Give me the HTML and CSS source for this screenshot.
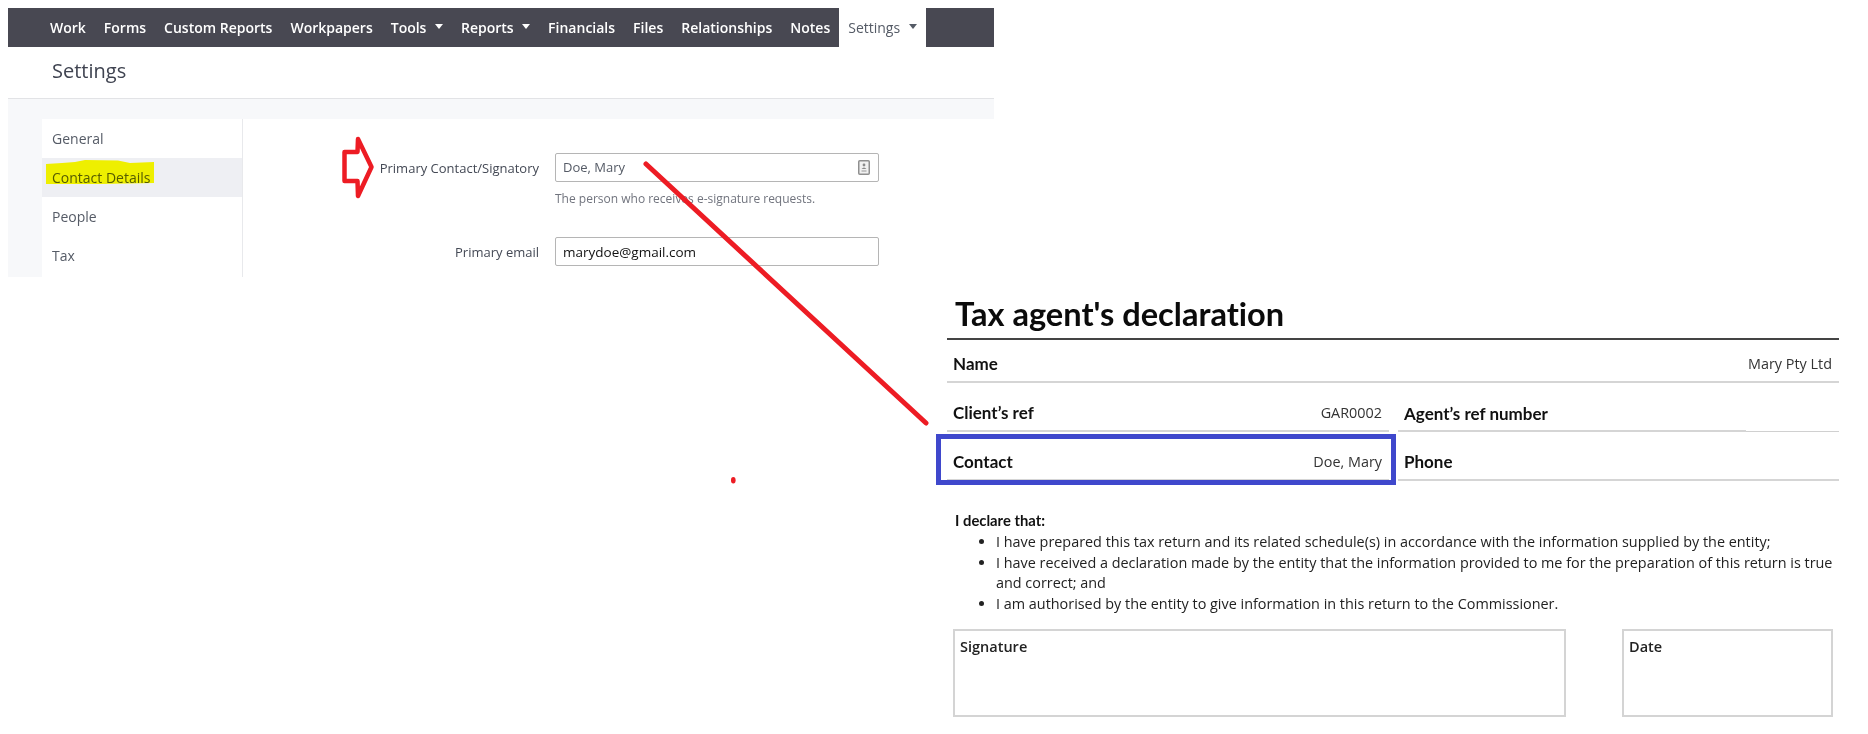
FILE: index.html
```html
<!DOCTYPE html>
<html lang="en">
<head>
<meta charset="utf-8">
<title>Settings and Tax agent's declaration</title>
<link rel="stylesheet" href="styles.css">
</head>
<body>
<div class="page">
  <section class="app">
    <nav class="nav">
      <a class="nav-item">Work</a>
      <a class="nav-item">Forms</a>
      <a class="nav-item">Custom Reports</a>
      <a class="nav-item">Workpapers</a>
      <a class="nav-item">Tools<i class="caret"></i></a>
      <a class="nav-item">Reports<i class="caret"></i></a>
      <a class="nav-item">Financials</a>
      <a class="nav-item">Files</a>
      <a class="nav-item">Relationships</a>
      <a class="nav-item">Notes</a>
      <a class="nav-item active">Settings<i class="caret"></i></a>
    </nav>
    <header class="app-head">Settings</header>
    <div class="app-body">
      <div class="sheet">
        <aside class="side">
          <div class="side-item">General</div>
          <div class="side-item current">Contact Details</div>
          <div class="side-item">People</div>
          <div class="side-item">Tax</div>
        </aside>
        <div class="form">
          <div class="field">
            <label class="field-label">Primary Contact/Signatory</label>
            <div class="input picker">
              <span>Doe, Mary</span>
              <svg class="book" width="12" height="15" viewBox="0 0 12 15">
                <rect x="0.75" y="0.75" width="10.5" height="13.5" rx="1" fill="#f1f1f1" stroke="#8f8f8f" stroke-width="1.5"/>
                <circle cx="6" cy="5" r="1.4" fill="#8a8a8a"/>
                <path d="M3.5 9 Q6 5.8 8.5 9 Z" fill="#8a8a8a"/>
                <rect x="3.5" y="10" width="5" height="2" fill="#c4c4c4"/>
              </svg>
            </div>
          </div>
          <p class="help">The person who receives e-signature requests.</p>
          <div class="field second">
            <label class="field-label">Primary email</label>
            <div class="input email">marydoe@gmail.com</div>
          </div>
        </div>
      </div>
    </div>
  </section>

  <section class="doc">
    <h1 class="doc-title">Tax agent's declaration</h1>
    <div class="doc-grid">
      <div class="row wide first"><b>Name</b><span class="val">Mary Pty Ltd</span></div>
      <div class="row"><b>Client’s ref</b><span class="val">GAR0002</span></div>
      <div class="row split"><b>Agent’s ref number</b></div>
      <div class="row"><b>Contact</b><span class="val">Doe, Mary</span></div>
      <div class="row"><b>Phone</b></div>
    </div>
    <p class="declare">I declare that:</p>
    <ul class="points">
      <li>I have prepared this tax return and its related schedule(s) in accordance with the information supplied by the entity;</li>
      <li>I have received a declaration made by the entity that the information provided to me for the preparation of this return is true and correct; and</li>
      <li>I am authorised by the entity to give information in this return to the Commissioner.</li>
    </ul>
    <div class="sign">
      <div class="sign-box signature">Signature</div>
      <div class="sign-box date">Date</div>
    </div>
  </section>

  <svg class="marks" width="1868" height="734" viewBox="0 0 1868 734">
    <path class="hl" d="M46 164 L62 163 L75 162 L85 160 L118 160.500 L130 163 L154 162 L154 183 L100 184 L46 184 Z"/>
    <path class="pen arrow" d="M344.500 152 H357.500 L358 139 L371.500 167 L358 196 L357.500 181 H344.500 Z"/>
    <path class="pen" d="M646 164 L926 423"/>
    <ellipse class="dot" cx="733.300" cy="480.300" rx="2.300" ry="3.300"/>
    <rect class="box" x="938.500" y="436.500" width="455" height="46"/>
  </svg>
</div>
</body>
</html>
```

FILE: styles.css
```css
* { box-sizing: border-box; }
html, body { margin: 0; padding: 0; background: #fff; }
.page {
  position: relative;
  width: 1868px;
  height: 734px;
  overflow: hidden;
  padding: 8px 0 0 8px;
  font-family: "Open Sans", sans-serif;
}

/* Settings app */
.app { width: 986px; height: 269px; overflow: hidden; }
.nav {
  display: flex;
  align-items: stretch;
  height: 39px;
  padding-left: 33px;
  background: #484852;
}
.nav-item {
  display: flex;
  align-items: center;
  padding: 0 9px;
  color: #fff;
  font-size: 14px;
  font-weight: 600;
  white-space: nowrap;
}
.nav-item.active { color: #555b66; background: #fff; font-weight: 400; }
.caret {
  width: 0;
  height: 0;
  margin: 0 0 2px 8.500px;
  border-top: 5px solid #fff;
  border-left: 4px solid transparent;
  border-right: 4px solid transparent;
}
.active .caret { border-top-color: #555b66; }
.app-head {
  height: 52px;
  padding: 10px 0 0 44px;
  color: #3f4350;
  font-size: 20px;
  line-height: 27px;
  border-bottom: 1px solid #e2e3e6;
}
.app-body { height: 178px; padding: 20px 0 0 34px; background: #f7f8fa; }
.sheet { display: flex; height: 158px; background: #fff; }
.side { width: 201px; border-right: 1px solid #e8e9ec; }
.side-item {
  height: 39px;
  padding-left: 10px;
  color: #555b66;
  font-size: 14px;
  line-height: 39px;
}
.side-item.current { background: #eeeff3; }
.form { flex: 1; padding: 34px 0 0 134px; }
.field { display: flex; align-items: center; }
.field.second { margin-top: 31px; }
.field-label {
  width: 162px;
  margin-right: 16px;
  color: #444955;
  font-size: 13px;
  text-align: right;
  white-space: nowrap;
}
.input {
  display: flex;
  align-items: center;
  justify-content: space-between;
  width: 324px;
  height: 29px;
  padding: 0 8px 0 7px;
  border: 1px solid #b5b5b5;
  border-radius: 2px;
  color: #555b66;
  font-size: 13px;
}
.input.picker span { margin-bottom: 1px; }
.input.email { color: #111; font-size: 13.500px; padding-left: 7px; }
.help {
  margin: 9px 0 0 178px;
  color: #71747e;
  font-size: 12px;
  line-height: 15px;
}

/* Declaration document */
.doc {
  width: 892px;
  margin: 14px 0 0 939px;
  color: #222;
  font-variant-ligatures: none;
}
.doc-title {
  height: 49px;
  margin: 0;
  padding-left: 8px;
  border-bottom: 2px solid #444;
  color: #0b0b0b;
  font-family: Lato, sans-serif;
  font-size: 32.600px;
  font-weight: 700;
  line-height: 46px;
}
.doc-grid { display: grid; grid-template-columns: 442px 441px; column-gap: 9px; }
.row {
  display: flex;
  align-items: center;
  justify-content: space-between;
  height: 49px;
  padding: 12px 7px 0 6px;
  border-bottom: 2px solid #d5d5d5;
  font-size: 14.400px;
}
.row.wide { grid-column: 1 / -1; height: 43px; padding-top: 5px; }
.row.split {
  border-bottom: 0;
  background:
    linear-gradient(#d5d5d5, #d5d5d5) left bottom / 348px 2px no-repeat,
    linear-gradient(#d0d0d0, #d0d0d0) left bottom / 100% 1px no-repeat;
}
.row b { color: #111; font-family: Lato, sans-serif; font-size: 17px; font-weight: 700; }
.row .val { color: #333; }
.declare {
  margin: 29px 0 0 8px;
  color: #111;
  font-family: Lato, sans-serif;
  font-size: 14.800px;
  font-weight: 700;
  line-height: 20px;
}
.points {
  margin: 2px 0 0;
  padding: 0 0 0 49px;
  font-size: 14.400px;
  line-height: 20.700px;
}
.sign { display: flex; justify-content: space-between; margin: 14px 6px 0 6px; }
.sign-box {
  height: 88px;
  padding: 6px 0 0 5px;
  border: 2px solid #d4d4d4;
  color: #222;
  font-size: 14.500px;
  font-weight: 600;
  line-height: 20px;
}
.signature { width: 613px; }
.date { width: 211px; }

/* Hand-drawn annotations pasted over the screenshots */
.marks { position: absolute; left: 0; top: 0; pointer-events: none; }
.hl { fill: #ffff00; mix-blend-mode: multiply; }
.pen { fill: none; stroke: #ed1c24; stroke-width: 5; stroke-linecap: round; stroke-linejoin: round; }
.pen.arrow { stroke-width: 4.500; }
.dot { fill: #ed1c24; }
.box { fill: none; stroke: #3f48cc; stroke-width: 5; }
```
